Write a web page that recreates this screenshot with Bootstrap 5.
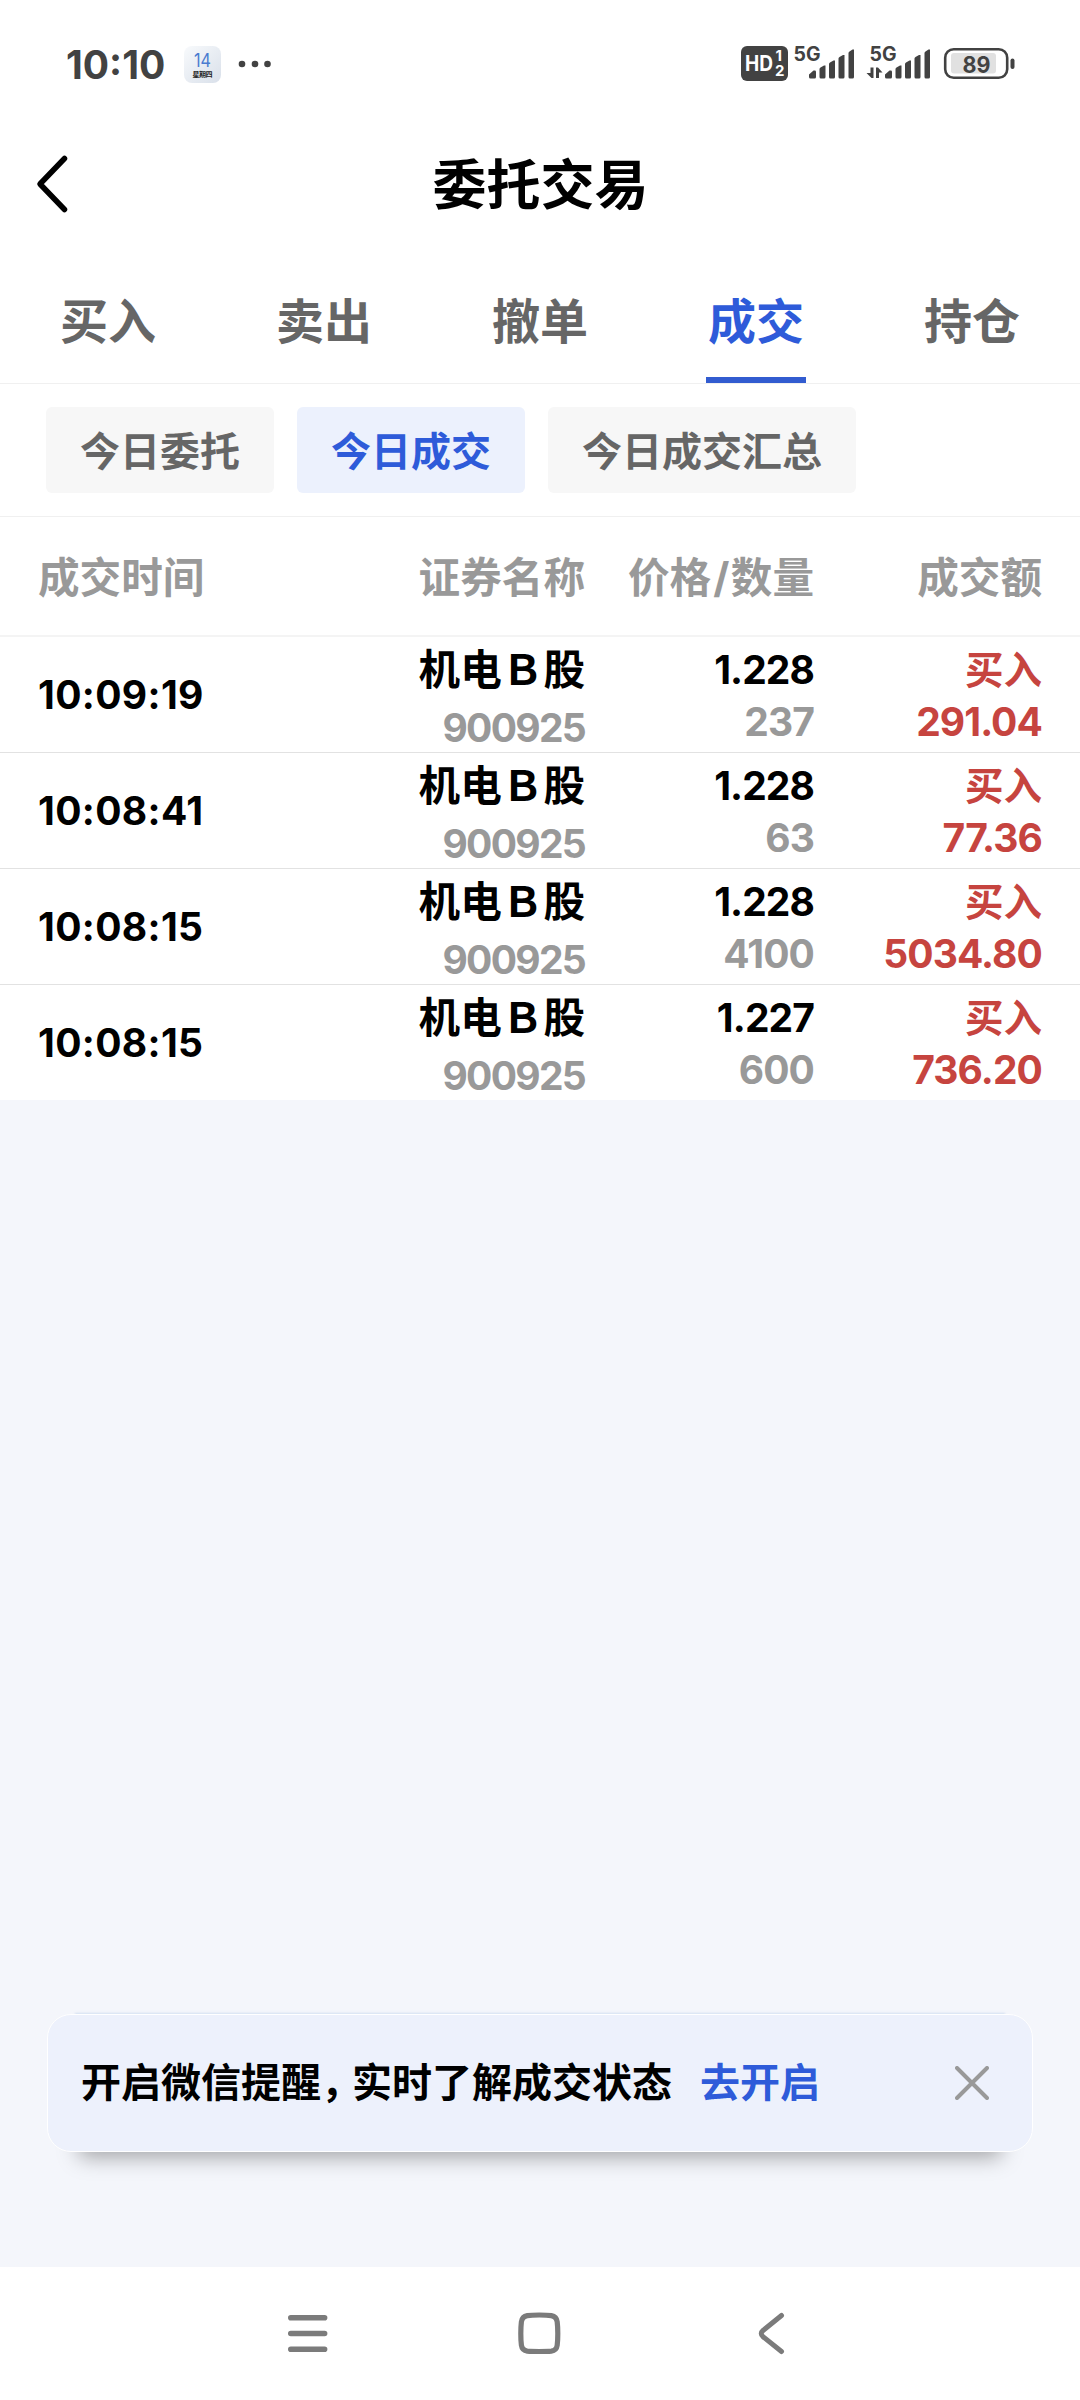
<!DOCTYPE html>
<html lang="zh-CN">
<head>
<meta charset="utf-8">
<meta name="viewport" content="width=device-width, initial-scale=1">
<title>委托交易</title>
<link href="https://cdn.jsdelivr.net/npm/bootstrap@5.3.0/dist/css/bootstrap.min.css" rel="stylesheet">
<style>
  body { font-family: Inter, "Noto Sans CJK SC", sans-serif; font-weight: 700; color: #000; background: #f4f6fb; }
  .screen { width: 1080px; height: 2400px; overflow: hidden; }
  .status-bar { height: 128px; padding-left: 66px; color: #424242; }
  .status-bar svg { display: block; }
  .clock { width: 118px; font-size: 39px; line-height: 1; }
  .title-bar { height: 112px; }
  .title-bar h1 { font-size: 54px; font-weight: 700; line-height: 116px; padding-left: 1px; }
  .title-bar .back-btn { left: 29px; top: 22px; line-height: 0; }
  .main-tabs { height: 144px; border-bottom: 1px solid #f0f0f0; }
  .main-tabs .nav-link { height: 143px; padding: 0; font-size: 48px; line-height: 163px; color: #666; position: relative; }
  .main-tabs .nav-link.active { color: #2e5bd9; }
  .main-tabs .nav-link.active::after { content: ""; position: absolute; left: 58px; bottom: 0; width: 100px; height: 6px; background: #325cd0; }
  .chips { height: 133px; padding: 0 46px; gap: 23px; border-bottom: 1px solid #f0f0f0; }
  .chips .btn { height: 86px; padding: 0 34px; border: 0; border-radius: 6px; font-size: 40px; font-weight: 700; line-height: 89px; color: #666; background: #f7f7f7; }
  .chips .btn.active { color: #2e5bd9; background: #ecf1fd; }
  .trade-row { display: grid; grid-template-columns: 320px 227px 229px 228px; padding: 0 38px; height: 116px; border-bottom: 1px solid #e2e2e2; text-align: right; }
  .trade-row > :first-child { text-align: left; }
  .trade-head { height: 120px; border-bottom: 2px solid #f4f4f4; font-size: 41.6px; line-height: 122px; color: #999; }
  .slash { padding: 0 1.500px 0 2px; }
  .trade-row:last-child { height: 115px; border-bottom: 0; }
  .trade-time { font-size: 39px; line-height: 115px; letter-spacing: .35px; }
  .trade-name { padding-top: 4px; font-size: 41.600px; line-height: 58px; }
  .trade-name .num { letter-spacing: -1.700px; }
  .trade-cell { padding-top: 7px; font-size: 39px; line-height: 52px; letter-spacing: -.9px; }
  .num { font-size: 39px; color: #999; }
  .buy { color: #c6443f; }
  .side { font-size: 38.500px; letter-spacing: 0; }
  .notice { width: 986px; height: 138px; margin: 0 0 0 47px; padding: 0 43px 0 33px; border: 1px solid #fff; border-radius: 24px; background: #edf1fc; font-size: 40px; box-shadow: 0 37px 20px -32px rgba(0,0,0,.34), 0 -29px 2px -28px rgba(190,208,235,.6); }
  .notice .comma { letter-spacing: -9px; }
  .notice a { font-size: 40px; color: #2e5bd9; margin-left: 28px; }
  .close-btn { line-height: 0; }
  .sys-nav { height: 133px; }
</style>
</head>
<body>
<div class="screen d-flex flex-column">
  <div class="bg-white">
    <div class="status-bar d-flex align-items-center">
      <span class="clock">10:10</span>
      <svg width="100" height="128" viewBox="184 0 100 128">
        <defs><linearGradient id="cal" x1="0" y1="0" x2="1" y2="1"><stop offset="0" stop-color="#f8fafc"/><stop offset="1" stop-color="#d9e0ea"/></linearGradient></defs>
        <rect x="184" y="46" width="37" height="37" rx="8" fill="url(#cal)"/>
        <text x="202.500" y="66.500" text-anchor="middle" font-family="Inter" font-size="19" font-weight="400" fill="#4b7cd0" textLength="17" lengthAdjust="spacingAndGlyphs">14</text>
        <text x="202.500" y="76.500" text-anchor="middle" font-family="Noto Sans CJK SC" font-size="7" font-weight="700" fill="#222" textLength="20">星期四</text>
        <g fill="#424242"><circle cx="242" cy="64" r="3.300"/><circle cx="255" cy="64" r="3.300"/><circle cx="267.500" cy="64" r="3.300"/></g>
      </svg>
      <svg class="ms-auto" width="360" height="128" viewBox="720 0 360 128" font-family="Inter" font-weight="700" fill="#424242">
        <rect x="741" y="46" width="47" height="35" rx="6"/>
        <g fill="#fff">
          <text x="745" y="71" font-size="21" textLength="28" lengthAdjust="spacingAndGlyphs">HD</text>
          <text x="775.500" y="61" font-size="15">1</text>
          <text x="775" y="76" font-size="15">2</text>
        </g>
        <text x="793.500" y="61" font-size="19.500" textLength="27" lengthAdjust="spacingAndGlyphs">5G</text>
        <text x="869.500" y="61" font-size="19.500" textLength="27" lengthAdjust="spacingAndGlyphs">5G</text>
        <g id="bars">
          <path d="M809 77v-2.500l4.500-4h1.300q1.200 0 1.200 1.200V77q0 1.500-1.500 1.500h-4q-1.500 0-1.500-1.500z"/>
          <path d="M819.500 69q0-1 1-1.500l3.500-2h1.500V77q0 1.500-1.500 1.500h-3q-1.500 0-1.500-1.500z"/>
          <path d="M829 64q0-1 1-1.500l3.500-2h1.500V77q0 1.500-1.500 1.500h-3q-1.500 0-1.500-1.500z"/>
          <path d="M838.500 58.500q0-1 1-1.500l3.500-2h1.500V77q0 1.500-1.500 1.500h-3q-1.500 0-1.500-1.500z"/>
          <path d="M848.500 53q0-1 1-1.500l3-2h1.500V77q0 1.500-1.500 1.500h-2.500q-1.500 0-1.500-1.500z"/>
        </g>
        <use href="#bars" x="76"/>
        <path d="M870.500 67.500h3v10.500h-2l-5-5h4zM876 67.500h2l4.500 5h-3.500v5.500h-3z"/>
        <rect x="945.200" y="49.200" width="62" height="28.600" rx="8.500" fill="#fff" stroke="#424242" stroke-width="2.600"/>
        <rect x="951" y="53" width="45" height="20.500" rx="3" fill="#e1e1e1"/>
        <text x="976.500" y="72.500" text-anchor="middle" font-size="22.500" textLength="28" lengthAdjust="spacingAndGlyphs">89</text>
        <rect x="1010.500" y="58.500" width="4" height="10.500" rx="2"/>
      </svg>
    </div>

    <header class="title-bar position-relative text-center">
      <a class="back-btn position-absolute" href="#" aria-label="返回"><svg width="50" height="68" fill="none" stroke="#000" stroke-width="5.500" stroke-linecap="round" stroke-linejoin="round"><path d="M35.500 8.500 11 34 35.500 59.500"/></svg></a>
      <h1 class="m-0">委托交易</h1>
    </header>

    <ul class="main-tabs nav nav-fill">
      <li class="nav-item"><a class="nav-link" href="#">买入</a></li>
      <li class="nav-item"><a class="nav-link" href="#">卖出</a></li>
      <li class="nav-item"><a class="nav-link" href="#">撤单</a></li>
      <li class="nav-item"><a class="nav-link active" href="#">成交</a></li>
      <li class="nav-item"><a class="nav-link" href="#">持仓</a></li>
    </ul>

    <div class="chips d-flex align-items-center">
      <button class="btn">今日委托</button>
      <button class="btn active">今日成交</button>
      <button class="btn">今日成交汇总</button>
    </div>

    <div>
      <div class="trade-row trade-head"><div>成交时间</div><div>证券名称</div><div>价格<span class="slash">/</span>数量</div><div>成交额</div></div>
      <div class="trade-row">
        <div class="trade-time">10:09:19</div>
        <div class="trade-name">机电&#xFF22;股<div class="num">900925</div></div>
        <div class="trade-cell">1.228<div class="num">237</div></div>
        <div class="trade-cell buy"><div class="side">买入</div><div>291.04</div></div>
      </div>
      <div class="trade-row">
        <div class="trade-time">10:08:41</div>
        <div class="trade-name">机电&#xFF22;股<div class="num">900925</div></div>
        <div class="trade-cell">1.228<div class="num">63</div></div>
        <div class="trade-cell buy"><div class="side">买入</div><div>77.36</div></div>
      </div>
      <div class="trade-row">
        <div class="trade-time">10:08:15</div>
        <div class="trade-name">机电&#xFF22;股<div class="num">900925</div></div>
        <div class="trade-cell">1.228<div class="num">4100</div></div>
        <div class="trade-cell buy"><div class="side">买入</div><div>5034.80</div></div>
      </div>
      <div class="trade-row">
        <div class="trade-time">10:08:15</div>
        <div class="trade-name">机电&#xFF22;股<div class="num">900925</div></div>
        <div class="trade-cell">1.227<div class="num">600</div></div>
        <div class="trade-cell buy"><div class="side">买入</div><div>736.20</div></div>
      </div>
    </div>
  </div>

  <main class="flex-grow-1 d-flex flex-column justify-content-end" style="padding-bottom:115px">
    <div class="notice d-flex align-items-center">
      <span>开启微信提醒<span class="comma">&#xFF0C;</span>实时了解成交状态</span>
      <a class="text-decoration-none" href="#">去开启</a>
      <a class="close-btn ms-auto" href="#" aria-label="关闭"><svg width="34" height="34" stroke="#999" stroke-width="4" stroke-linecap="round"><path d="M2 2 32 32M32 2 2 32"/></svg></a>
    </div>
  </main>

  <nav class="sys-nav bg-white">
    <svg class="d-block" width="1080" height="133" viewBox="0 2267 1080 133" fill="none" stroke="#7b7b7b" stroke-linecap="round" stroke-linejoin="round">
      <path stroke-width="5.600" d="M290.800 2317.700h33.800M290.800 2333.500h33.800M290.800 2349.200h33.800"/>
      <path stroke-width="5.200" d="M539.300 2315q8 0 12 .6 5.200 1 5.900 6.200.6 5 .6 11.700t-.6 11.700q-.7 5.200-5.900 5.900-4 .4-12 .4t-12-.4q-5.200-.7-5.900-5.900-.6-5-.6-11.700t.6-11.700q.7-5.200 5.900-6.200 4-.6 12-.6z"/>
      <path stroke-width="5" d="M781.500 2315.500 763 2330.500q-3.500 3 0 6.200L781.500 2351.500"/>
    </svg>
  </nav>
</div>
<script src="https://cdn.jsdelivr.net/npm/bootstrap@5.3.0/dist/js/bootstrap.bundle.min.js"></script>
</body>
</html>
